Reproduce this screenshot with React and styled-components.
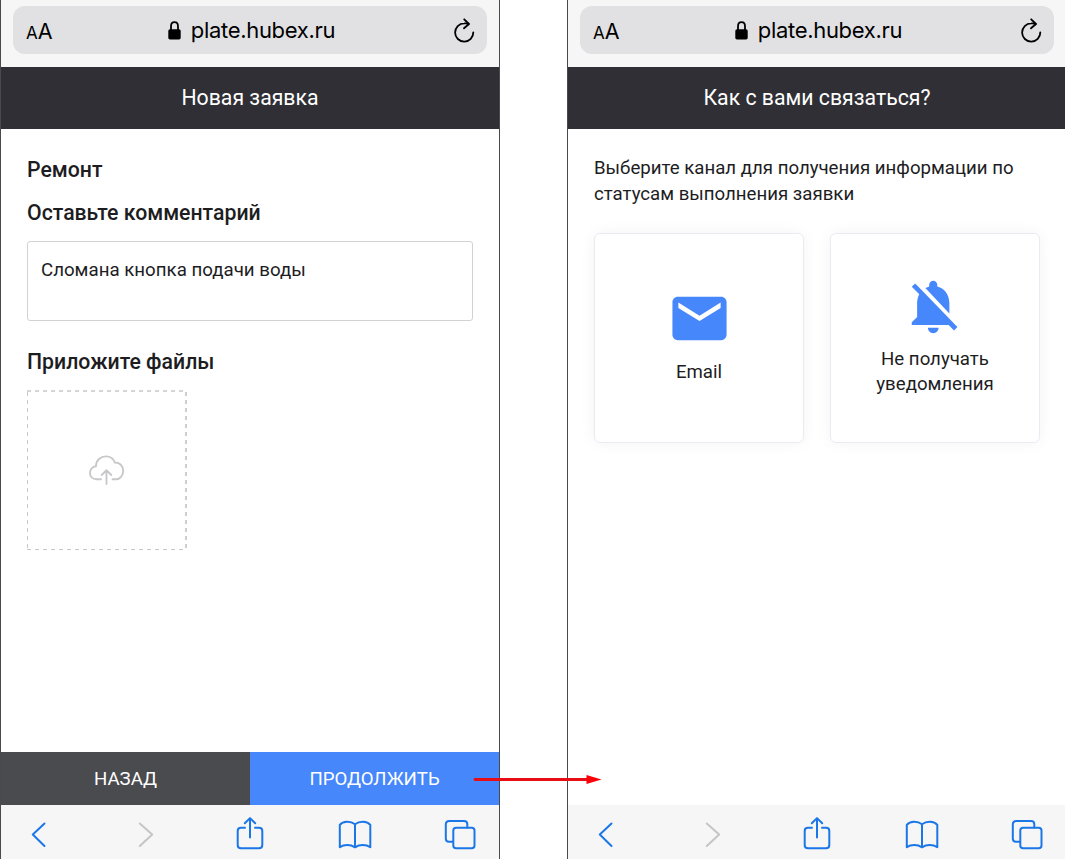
import React from "react";
import styled, { createGlobalStyle } from "styled-components";
import { MdNotificationsOff } from "react-icons/md";

const GlobalStyle = createGlobalStyle`
  * { box-sizing: border-box; }
  html, body { margin: 0; padding: 0; background: #fff; overflow: hidden; }
  body { font-family: Roboto, "Liberation Sans", sans-serif; color: #1d1d1f; }
`;

const Stage = styled.main`
  position: relative;
  display: flex;
  gap: 67px;
  width: 1065px;
  height: 859px;
  overflow: hidden;
`;

const Phone = styled.section`
  flex: none;
  display: flex;
  flex-direction: column;
  width: 500px;
  height: 859px;
  border: solid #4a4a4c;
  border-width: 0 1px;
  background: #fff;
`;

const BrowserTop = styled.div`
  flex: none;
  height: 67px;
  padding: 6px 12px 0;
  background: #f6f6f6;
`;

const AddressBar = styled.div`
  display: flex;
  align-items: center;
  justify-content: space-between;
  height: 48px;
  padding: 0 12px 0 13px;
  border-radius: 12px;
  background: #e1e1e3;
  color: #000;
  font-family: Inter, Roboto, sans-serif;
`;

const TextSize = styled.span`
  width: 40px;
  padding-top: 5px;
  font-size: 21.5px;
  line-height: 45px;
  small { font-size: 17px; }
`;

const Site = styled.div`
  display: flex;
  align-items: center;
  gap: 10px;
  margin-left: 2px;
`;

const Url = styled.span`
  font-size: 22px;
  line-height: 48px;
  letter-spacing: -0.32px;
`;

const ReloadSlot = styled.span`
  display: flex;
  justify-content: flex-end;
  width: 40px;
  padding-top: 1px;
`;

const TitleBar = styled.h1`
  flex: none;
  margin: 0;
  height: 62px;
  background: #302f35;
  color: #fff;
  font-size: 21.25px;
  font-weight: 400;
  line-height: 61px;
  text-align: center;
`;

const Body = styled.div`
  flex: 1;
  padding: ${(p) => p.$top} 26px 0;
`;

const Heading = styled.h2`
  margin: 0 0 ${(p) => p.$gap};
  font-size: 21.25px;
  font-weight: 500;
  line-height: 26px;
`;

const Comment = styled.div`
  height: 80px;
  margin-bottom: 28px;
  padding: 15px 13px;
  border: 1px solid #d2d2d4;
  border-radius: 3px;
  font-size: 18.7px;
  line-height: 26px;
`;

const DropZone = styled.div`
  width: 160px;
  height: 160px;
  svg { display: block; }
`;

const Actions = styled.div`
  flex: none;
  display: flex;
  height: 53px;
`;

const Action = styled.button`
  flex: 1;
  border: 0;
  padding: 0;
  background: ${(p) => (p.$primary ? "#4687fb" : "#4a4b4f")};
  color: #fff;
  font-family: inherit;
  font-size: 18.65px;
  line-height: 52px;
`;

const BrowserNav = styled.nav`
  flex: none;
  height: 54px;
  background: #f6f6f6;
  svg { display: block; }
`;

const Intro = styled.p`
  margin: 0;
  font-size: 18.65px;
  line-height: 26px;
  white-space: nowrap;
`;

const Channels = styled.div`
  display: flex;
  gap: 26px;
  margin-top: 26px;
`;

const Channel = styled.div`
  display: flex;
  flex-direction: column;
  align-items: center;
  width: 210px;
  height: 210px;
  padding-top: ${(p) => p.$top};
  border: 1px solid #e9ebf3;
  border-radius: 6px;
  box-shadow: 0 0 15px rgba(30, 40, 80, 0.05);
  font-size: 18.65px;
  line-height: 25.5px;
  text-align: center;
  svg {
    flex: none;
    color: #4687fb;
    margin: 0 ${(p) => p.$nudge || 0} ${(p) => p.$gap} 0;
  }
`;

const FlowArrow = styled.svg`
  position: absolute;
  left: 472px;
  top: 770px;
`;

function Lock() {
  return (
    <svg width="13" height="19" viewBox="0 0 13 19">
      <path d="M3 9V5.4C3 2.9 4.3 1.2 6.5 1.2S10 2.9 10 5.4V9" fill="none" stroke="#000" strokeWidth="1.8" />
      <rect x="0.3" y="8.2" width="12.4" height="10.3" rx="1.7" />
    </svg>
  );
}

function Reload() {
  return (
    <svg width="22" height="26" viewBox="0 0 22 26" fill="none" stroke="#000" strokeWidth="1.8" strokeLinecap="round" strokeLinejoin="round">
      <path d="M20.3 14.3A9.1 9.1 0 1 1 11.2 5.4Q13.5 5.2 15.6 5.8" />
      <path d="M11.2 1.3L16 6L11 10.3" />
    </svg>
  );
}

function Browser() {
  return (
    <BrowserTop>
      <AddressBar>
        <TextSize><small>A</small>A</TextSize>
        <Site><Lock /><Url>plate.hubex.ru</Url></Site>
        <ReloadSlot><Reload /></ReloadSlot>
      </AddressBar>
    </BrowserTop>
  );
}

function Navigation() {
  return (
    <BrowserNav>
      <svg width="498" height="54" viewBox="1 805 498 54" fill="none" stroke="#1b77e8" strokeWidth="2" strokeLinecap="round" strokeLinejoin="round">
        <path d="M44.5 823.5L32.8 834.5L44.5 846" />
        <path d="M139.8 823.5L152.2 834.5L139.8 846" stroke="#c5c5c7" />
        <path d="M245 827.8H241Q237.7 827.8 237.7 831V845Q237.7 848.3 241 848.3H259Q262.3 848.3 262.3 845V831Q262.3 827.8 259 827.8H255M250 837.5V818.5M244.8 823.3L250 818.1L255.2 823.3" />
        <path d="M355 824.2C350.5 820.8 343 820.8 339.8 824.8V847.3C344 844.3 350.5 844.3 355 847.3C359.5 844.3 366 844.3 370.3 847.3V824.8C367 820.8 359.5 820.8 355 824.2ZM355 824.2V847.3" />
        <path d="M453 841.7H449Q445.8 841.7 445.8 838.5V824.5Q445.8 821 449.3 821H464Q467.3 821 467.3 824.3V827.5" />
        <rect x="453.3" y="827.8" width="21.2" height="20.4" rx="2.8" />
      </svg>
    </BrowserNav>
  );
}

function Upload() {
  return (
    <svg width="160" height="160" viewBox="27 390 160 160" fill="none" stroke="#c8c8ca">
      <path d="M27 391H186" strokeWidth="1.7" strokeDasharray="4 4" />
      <path d="M27.5 392V549" strokeWidth="1" strokeDasharray="4 4" />
      <path d="M186 392V550" strokeWidth="1.8" strokeDasharray="4 4" />
      <path d="M27 549.5H187" strokeWidth="1" strokeDasharray="4 4" />
      <path d="M101 479.3H96.5C92.5 479.3 90 476.5 90 472.9C90 469.4 92.5 466.7 96 466.3C96 460.2 100.5 456.4 106 456.4C110.5 456.4 113.7 459 115 462.7C119.5 462.3 123.2 465.9 123.2 470.7C123.2 475.5 120 479.3 116 479.3H112.5M106.5 484V470.5M101.7 475L106.5 470.3L111.3 475" strokeWidth="1.9" strokeLinecap="round" strokeLinejoin="round" />
    </svg>
  );
}

function Mail() {
  return (
    <svg width="65" height="65" viewBox="0 0 24 24" fill="currentColor">
      <path d="M20 4H4c-1.1 0-1.99.9-1.99 2L2 18c0 1.1.9 2 2 2h16c1.1 0 2-.9 2-2V6c0-1.1-.9-2-2-2zm-.2 4.1l-7.8 4.8-7.8-4.8V6.1l7.8 4.9 7.8-4.9z" />
    </svg>
  );
}

export default function App() {
  return (
    <>
      <GlobalStyle />
      <Stage>
        <Phone>
          <Browser />
          <TitleBar>Новая заявка</TitleBar>
          <Body $top="28px">
            <Heading $gap="17px">Ремонт</Heading>
            <Heading $gap="15px">Оставьте комментарий</Heading>
            <Comment>Сломана кнопка подачи воды</Comment>
            <Heading $gap="15px">Приложите файлы</Heading>
            <DropZone><Upload /></DropZone>
          </Body>
          <Actions>
            <Action>НАЗАД</Action>
            <Action $primary>ПРОДОЛЖИТЬ</Action>
          </Actions>
          <Navigation />
        </Phone>
        <Phone>
          <Browser />
          <TitleBar>Как с вами связаться?</TitleBar>
          <Body $top="26px">
            <Intro>Выберите канал для получения информации по<br />статусам выполнения заявки</Intro>
            <Channels>
              <Channel $top="52px" $gap="9px"><Mail />Email</Channel>
              <Channel $top="40px" $gap="8px" $nudge="3px">
                <MdNotificationsOff size={64.5} />
                Не получать<br />уведомления
              </Channel>
            </Channels>
          </Body>
          <Navigation />
        </Phone>
        <FlowArrow width="132" height="18" viewBox="472 770 132 18">
          <path d="M475 779.5H590" stroke="#e80c14" strokeWidth="2.8" strokeLinecap="round" />
          <path d="M586.5 775L601.5 779.5L586.5 784Z" fill="#fb0007" />
        </FlowArrow>
      </Stage>
    </>
  );
}
